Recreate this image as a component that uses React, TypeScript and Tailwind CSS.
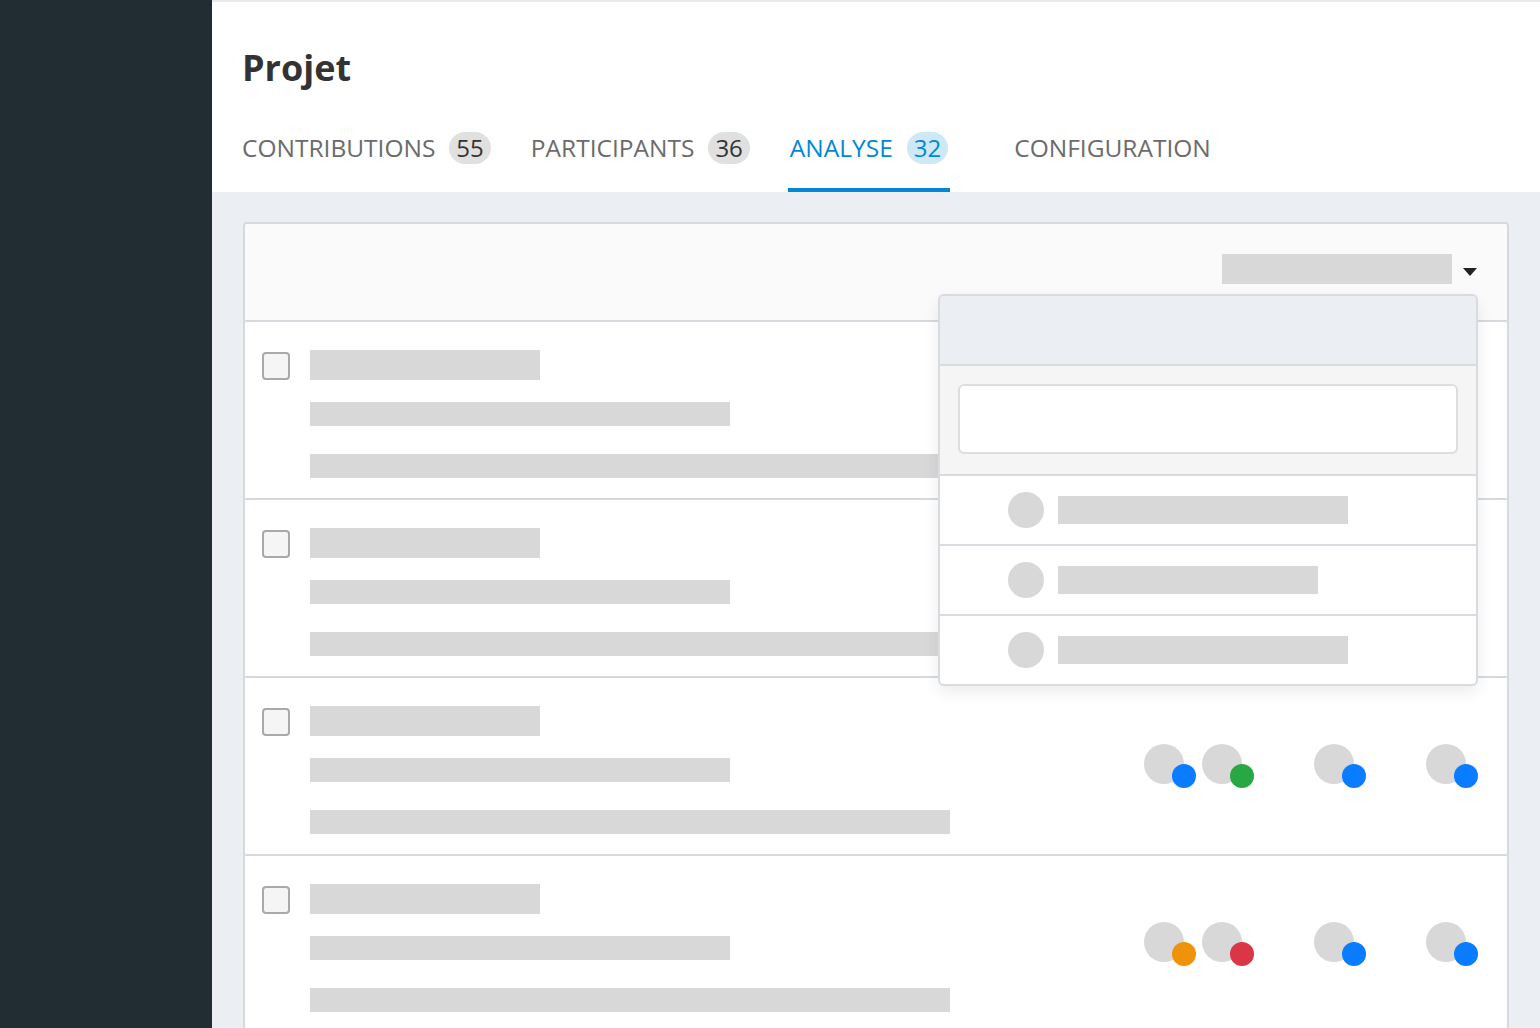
import { FC } from "react";

type Tab = { label: string; count?: number; active?: boolean; extra?: string };

const tabs: Tab[] = [
  { label: "CONTRIBUTIONS", count: 55 },
  { label: "PARTICIPANTS", count: 36 },
  { label: "ANALYSE", count: 32, active: true },
  { label: "CONFIGURATION", extra: "ml-[26px]" },
];

const BLUE = "bg-[#0a7cff]";

// each row: groups of avatar dots (colour of the status dot)
const rows: string[][][] = [
  [],
  [],
  [[BLUE, "bg-[#28a745]"], [BLUE], [BLUE]],
  [["bg-[#f0930a]", "bg-[#dc3545]"], [BLUE], [BLUE]],
];

const Avatar: FC<{ dot: string }> = ({ dot }) => (
  <div className="relative w-[40px] h-[40px] rounded-full bg-[#d8d8d8]">
    <span className={`absolute right-[-12px] bottom-[-4px] w-[24px] h-[24px] rounded-full ${dot}`} />
  </div>
);

const Dropdown = () => (
  <div className="absolute top-[40px] right-[-1px] w-[540px] z-10 bg-white border-2 border-[#d8dbe0] rounded-[6px] overflow-hidden shadow-[0_6px_16px_rgba(0,0,0,0.08)]">
    {/* Header */}
    <div className="h-[70px] bg-[#ebeef2] border-b-2 border-[#d8dbe0]" />
    {/* Search */}
    <div className="bg-[#f5f5f5] pt-[18px] pb-[20px] px-[18px] border-b-2 border-[#d8dbe0]">
      <div className="h-[70px] bg-white border-2 border-[#dddddd] rounded-[6px]" />
    </div>
    {/* Options */}
    {[290, 260, 290].map((w, i) => (
      <div
        key={i}
        className={`h-[68px] box-content flex items-center pl-[68px] gap-[14px] ${i > 0 ? "border-t-2 border-[#d8dbe0]" : ""}`}
      >
        <div className="w-[36px] h-[36px] rounded-full bg-[#d8d8d8]" />
        <div className="h-[28px] bg-[#d8d8d8]" style={{ width: w }} />
      </div>
    ))}
  </div>
);

export default function App() {
  return (
    <div className="flex h-[1028px] overflow-hidden font-['Open_Sans',sans-serif]">
      {/* Sidebar */}
      <aside className="w-[212px] shrink-0 bg-[#212c33]" />

      <main className="flex-1 flex flex-col bg-[#ebeef2] min-w-0">
        {/* Header */}
        <header className="bg-white border-t-2 border-[#e8ebee] px-[28px] pt-[47px]">
          <h1 className="text-[36px] leading-[38px] font-bold text-[#333333] ml-[2px]">Projet</h1>
          <nav className="flex gap-[36px] mt-[45px]">
            {tabs.map((t) => (
              <div
                key={t.label}
                className={`flex items-center gap-[14px] h-[32px] px-[2px] pb-[24px] box-content border-b-4 ${
                  t.active ? "border-[#0288d1]" : "border-transparent"
                } ${t.extra ?? ""}`}
              >
                <span
                  className={`text-[24.5px] leading-[32px] ${t.active ? "text-[#0288d1]" : "text-[#6b6b6b]"}`}
                >
                  {t.label}
                </span>
                {t.count !== undefined && (
                  <span
                    className={`h-[32px] px-[7px] rounded-full text-[24px] leading-[32px] ${
                      t.active ? "bg-[#cfe8f6] text-[#0288d1]" : "bg-[#e0e0e0] text-[#333333]"
                    }`}
                  >
                    {t.count}
                  </span>
                )}
              </div>
            ))}
          </nav>
        </header>

        {/* Content */}
        <section className="flex-1 px-[31px] pt-[30px]">
          <div className="bg-white border-2 border-[#d5dadf] rounded-[4px]">
            {/* Card header */}
            <div className="h-[98px] bg-[#fafafa] border-b-2 border-[#d5dadf] rounded-t-[4px] flex justify-end pr-[30px] pt-[30px]">
              <div className="relative flex items-start gap-[11px] h-[30px]">
                <div className="w-[230px] h-[30px] bg-[#d8d8d8]" />
                <svg className="mt-[14px]" width="14" height="8" viewBox="0 0 14 8">
                  <polygon points="0,0 14,0 7,8" fill="#222222" />
                </svg>
                <Dropdown />
              </div>
            </div>

            {/* Rows */}
            {rows.map((groups, i) => (
              <div
                key={i}
                className={`flex items-start pl-[17px] pr-[41px] pt-[28px] pb-[20px] ${
                  i > 0 ? "border-t-2 border-[#d5dadf]" : ""
                }`}
              >
                <div className="mt-[2px] w-[28px] h-[28px] shrink-0 rounded-[4px] border-2 border-[#a9a9a9] bg-[#f5f5f5]" />
                <div className="ml-[20px] flex flex-col">
                  <div className="w-[230px] h-[30px] bg-[#d8d8d8]" />
                  <div className="w-[420px] h-[24px] mt-[22px] bg-[#d8d8d8]" />
                  <div className="w-[640px] h-[24px] mt-[28px] bg-[#d8d8d8]" />
                </div>
                <div className="flex-1" />
                {groups.length > 0 && (
                  <div className="mt-[38px] flex gap-[72px]">
                    {groups.map((g, j) => (
                      <div key={j} className="flex gap-[18px]">
                        {g.map((dot, k) => (
                          <Avatar key={k} dot={dot} />
                        ))}
                      </div>
                    ))}
                  </div>
                )}
              </div>
            ))}
          </div>
        </section>
      </main>
    </div>
  );
}
